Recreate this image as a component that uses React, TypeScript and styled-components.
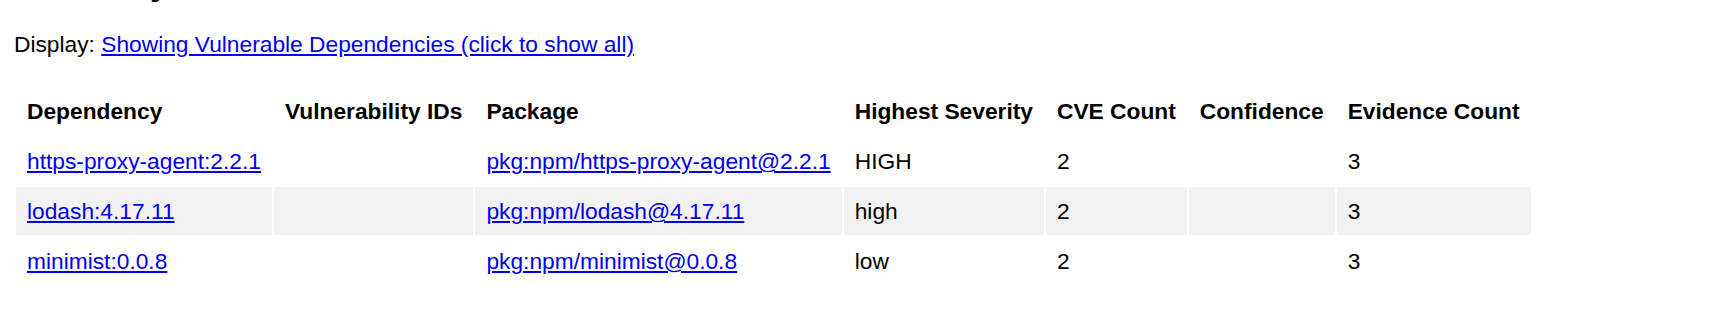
import styled, { createGlobalStyle } from 'styled-components';

const GlobalStyle = createGlobalStyle`
    html, body {
        margin: 0;
        padding: 0;
        background: #fff;
    }
    body {
        font-family: 'Liberation Sans', Arial, sans-serif;
        font-size: 22.75px;
        color: #000;
    }
`;

type Row = {
    dependency: string;
    vulnIds: string;
    pkg: string;
    severity: string;
    cveCount: string;
    confidence: string;
    evidenceCount: string;
};

const rows: Row[] = [
    {
        dependency: 'https-proxy-agent:2.2.1',
        vulnIds: '',
        pkg: 'pkg:npm/https-proxy-agent@2.2.1',
        severity: 'HIGH',
        cveCount: '2',
        confidence: '',
        evidenceCount: '3',
    },
    {
        dependency: 'lodash:4.17.11',
        vulnIds: '',
        pkg: 'pkg:npm/lodash@4.17.11',
        severity: 'high',
        cveCount: '2',
        confidence: '',
        evidenceCount: '3',
    },
    {
        dependency: 'minimist:0.0.8',
        vulnIds: '',
        pkg: 'pkg:npm/minimist@0.0.8',
        severity: 'low',
        cveCount: '2',
        confidence: '',
        evidenceCount: '3',
    },
];

const headers = [
    'Dependency',
    'Vulnerability IDs',
    'Package',
    'Highest Severity',
    'CVE Count',
    'Confidence',
    'Evidence Count',
];

function App() {
    return (
        <>
            <GlobalStyle />
            <Page>
                <Heading>Summary</Heading>
                <DisplayLine>
                    Display: <Link href='#'>Showing Vulnerable Dependencies (click to show all)</Link>
                </DisplayLine>
                <SummaryTable>
                    <thead>
                        <tr>
                            {headers.map((h) => (
                                <HeadCell key={h}>{h}</HeadCell>
                            ))}
                        </tr>
                    </thead>
                    <tbody>
                        {rows.map((r, i) => (
                            <BodyRow key={r.dependency} $odd={i % 2 === 1}>
                                <Cell>
                                    <Link href='#'>{r.dependency}</Link>
                                </Cell>
                                <Cell>{r.vulnIds}</Cell>
                                <Cell>
                                    <Link href='#'>{r.pkg}</Link>
                                </Cell>
                                <Cell>{r.severity}</Cell>
                                <Cell>{r.cveCount}</Cell>
                                <Cell>{r.confidence}</Cell>
                                <Cell>{r.evidenceCount}</Cell>
                            </BodyRow>
                        ))}
                    </tbody>
                </SummaryTable>
            </Page>
        </>
    );
}

const Page = styled.div`
    display: flow-root;
    padding-left: 14px;
`;

const Heading = styled.h2`
    font-size: 34px;
    font-weight: bold;
    line-height: 39px;
    margin: -36px 0 28px;
`;

const DisplayLine = styled.p`
    margin: 0;
    line-height: 26px;
`;

const Link = styled.a`
    color: #0000ee;
    text-decoration: underline;
`;

const SummaryTable = styled.table`
    margin-top: 28px;
    border-spacing: 2.5px;
`;

const HeadCell = styled.th`
    text-align: left;
    font-weight: bold;
    padding: 10px 11px;
    line-height: 28px;
    white-space: nowrap;
`;

const BodyRow = styled.tr<{ $odd: boolean }>`
    background: ${(p) => (p.$odd ? '#f2f2f2' : 'transparent')};
`;

const Cell = styled.td`
    padding: 10px 11px;
    line-height: 28px;
    white-space: nowrap;
`;

export default App;
